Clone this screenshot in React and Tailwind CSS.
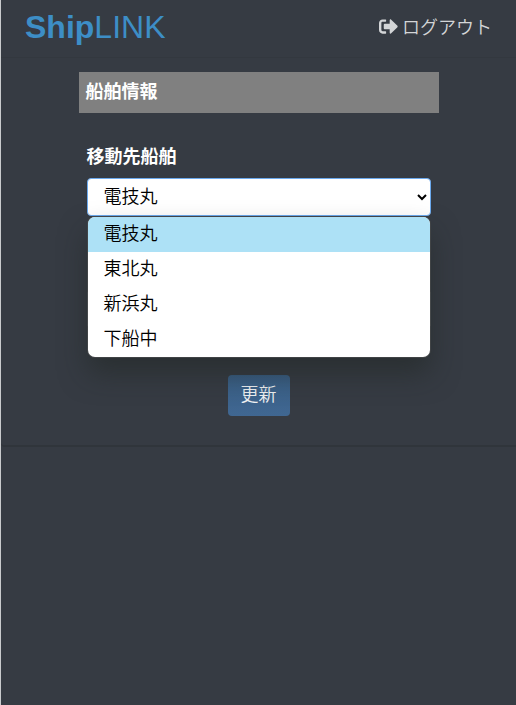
import React, { useState } from 'react';
import { FaSignOutAlt } from 'react-icons/fa';

const ships = ['電技丸', '東北丸', '新浜丸', '下船中'];

const Header = () => (
  <header className="flex h-[58px] items-start justify-between border-b border-[#33383f] pl-6 pr-[24px]">
    <h1 className="mt-1 font-['Liberation_Sans',Arial,sans-serif] text-[32px] leading-[46px] text-[#3d8ec6]">
      <span className="font-bold">Ship</span>LINK
    </h1>
    <a href="#" className="mt-[13px] flex items-center text-[18px] font-[350] leading-[27px] text-[#d3d5d7]">
      <FaSignOutAlt className="mr-[4px] h-[19px] w-[19px]" />
      ログアウト
    </a>
  </header>
);

const ShipSelect = () => {
  const [selected, setSelected] = useState(ships[0]);
  const [open, setOpen] = useState(true);

  const choose = (ship) => {
    setSelected(ship);
    setOpen(false);
  };

  return (
    <div className="relative">
      <button
        type="button"
        onClick={() => setOpen(!open)}
        className="flex h-[38px] w-full items-center justify-between rounded-[4px] border border-[#6ba9ee] bg-white pl-4 pr-[3px] text-[18px] font-[350] text-black"
      >
        <span className="leading-[31px] pb-[4px]">{selected}</span>
        <svg className="h-[10px] w-[10px]" viewBox="0 0 10 10" fill="none" stroke="black" strokeWidth="2">
          <path d="M1 3l4 4 4-4" />
        </svg>
      </button>
      {open && (
        <ul className="absolute left-px right-px top-[39px] z-10 overflow-hidden rounded-[7px] bg-white text-[18px] font-[350] text-black shadow-[0_0_0_1px_rgba(70,72,74,0.8),0_16px_28px_0_rgba(30,36,32,0.5)]">
          {ships.map((ship) => (
            <li
              key={ship}
              onClick={() => choose(ship)}
              className={`h-[35px] cursor-default pl-4 leading-[31px] ${ship === selected ? 'bg-[#ade1f6]' : ''}`}
            >
              {ship}
            </li>
          ))}
        </ul>
      )}
    </div>
  );
};

const App = () => (
  <div className="min-h-screen border-l border-[#c9cbcd] bg-[#363b43] font-['Noto_Sans_CJK_JP',sans-serif]">
    <Header />
    <main className="flex h-[389px] flex-col items-center rounded-bl-[4px] border-b-2 border-[#30353b] pt-[14px]">
      <section className="w-[360px]">
        <h2 className="h-[41px] bg-[#808080] pl-[7px] text-[18px] font-bold leading-[37px] text-white">船舶情報</h2>
        <div className="px-2 pt-[29px]">
          <label className="mb-[9px] block text-[18px] font-bold leading-[27px] text-white">移動先船舶</label>
          <ShipSelect />
          <div className="mt-[74px] h-[38px] rounded-[4px] border border-[#5c6268] bg-white" />
        </div>
      </section>
      <button
        type="button"
        className="mt-[47px] h-[41px] w-[62px] shrink-0 rounded-[4px] bg-linear-to-b from-[#395e84] to-[#406792] pb-[4px] text-[18px] font-[350] leading-[37px] text-[#eff1f3]"
      >
        更新
      </button>
    </main>
  </div>
);

export default App;
